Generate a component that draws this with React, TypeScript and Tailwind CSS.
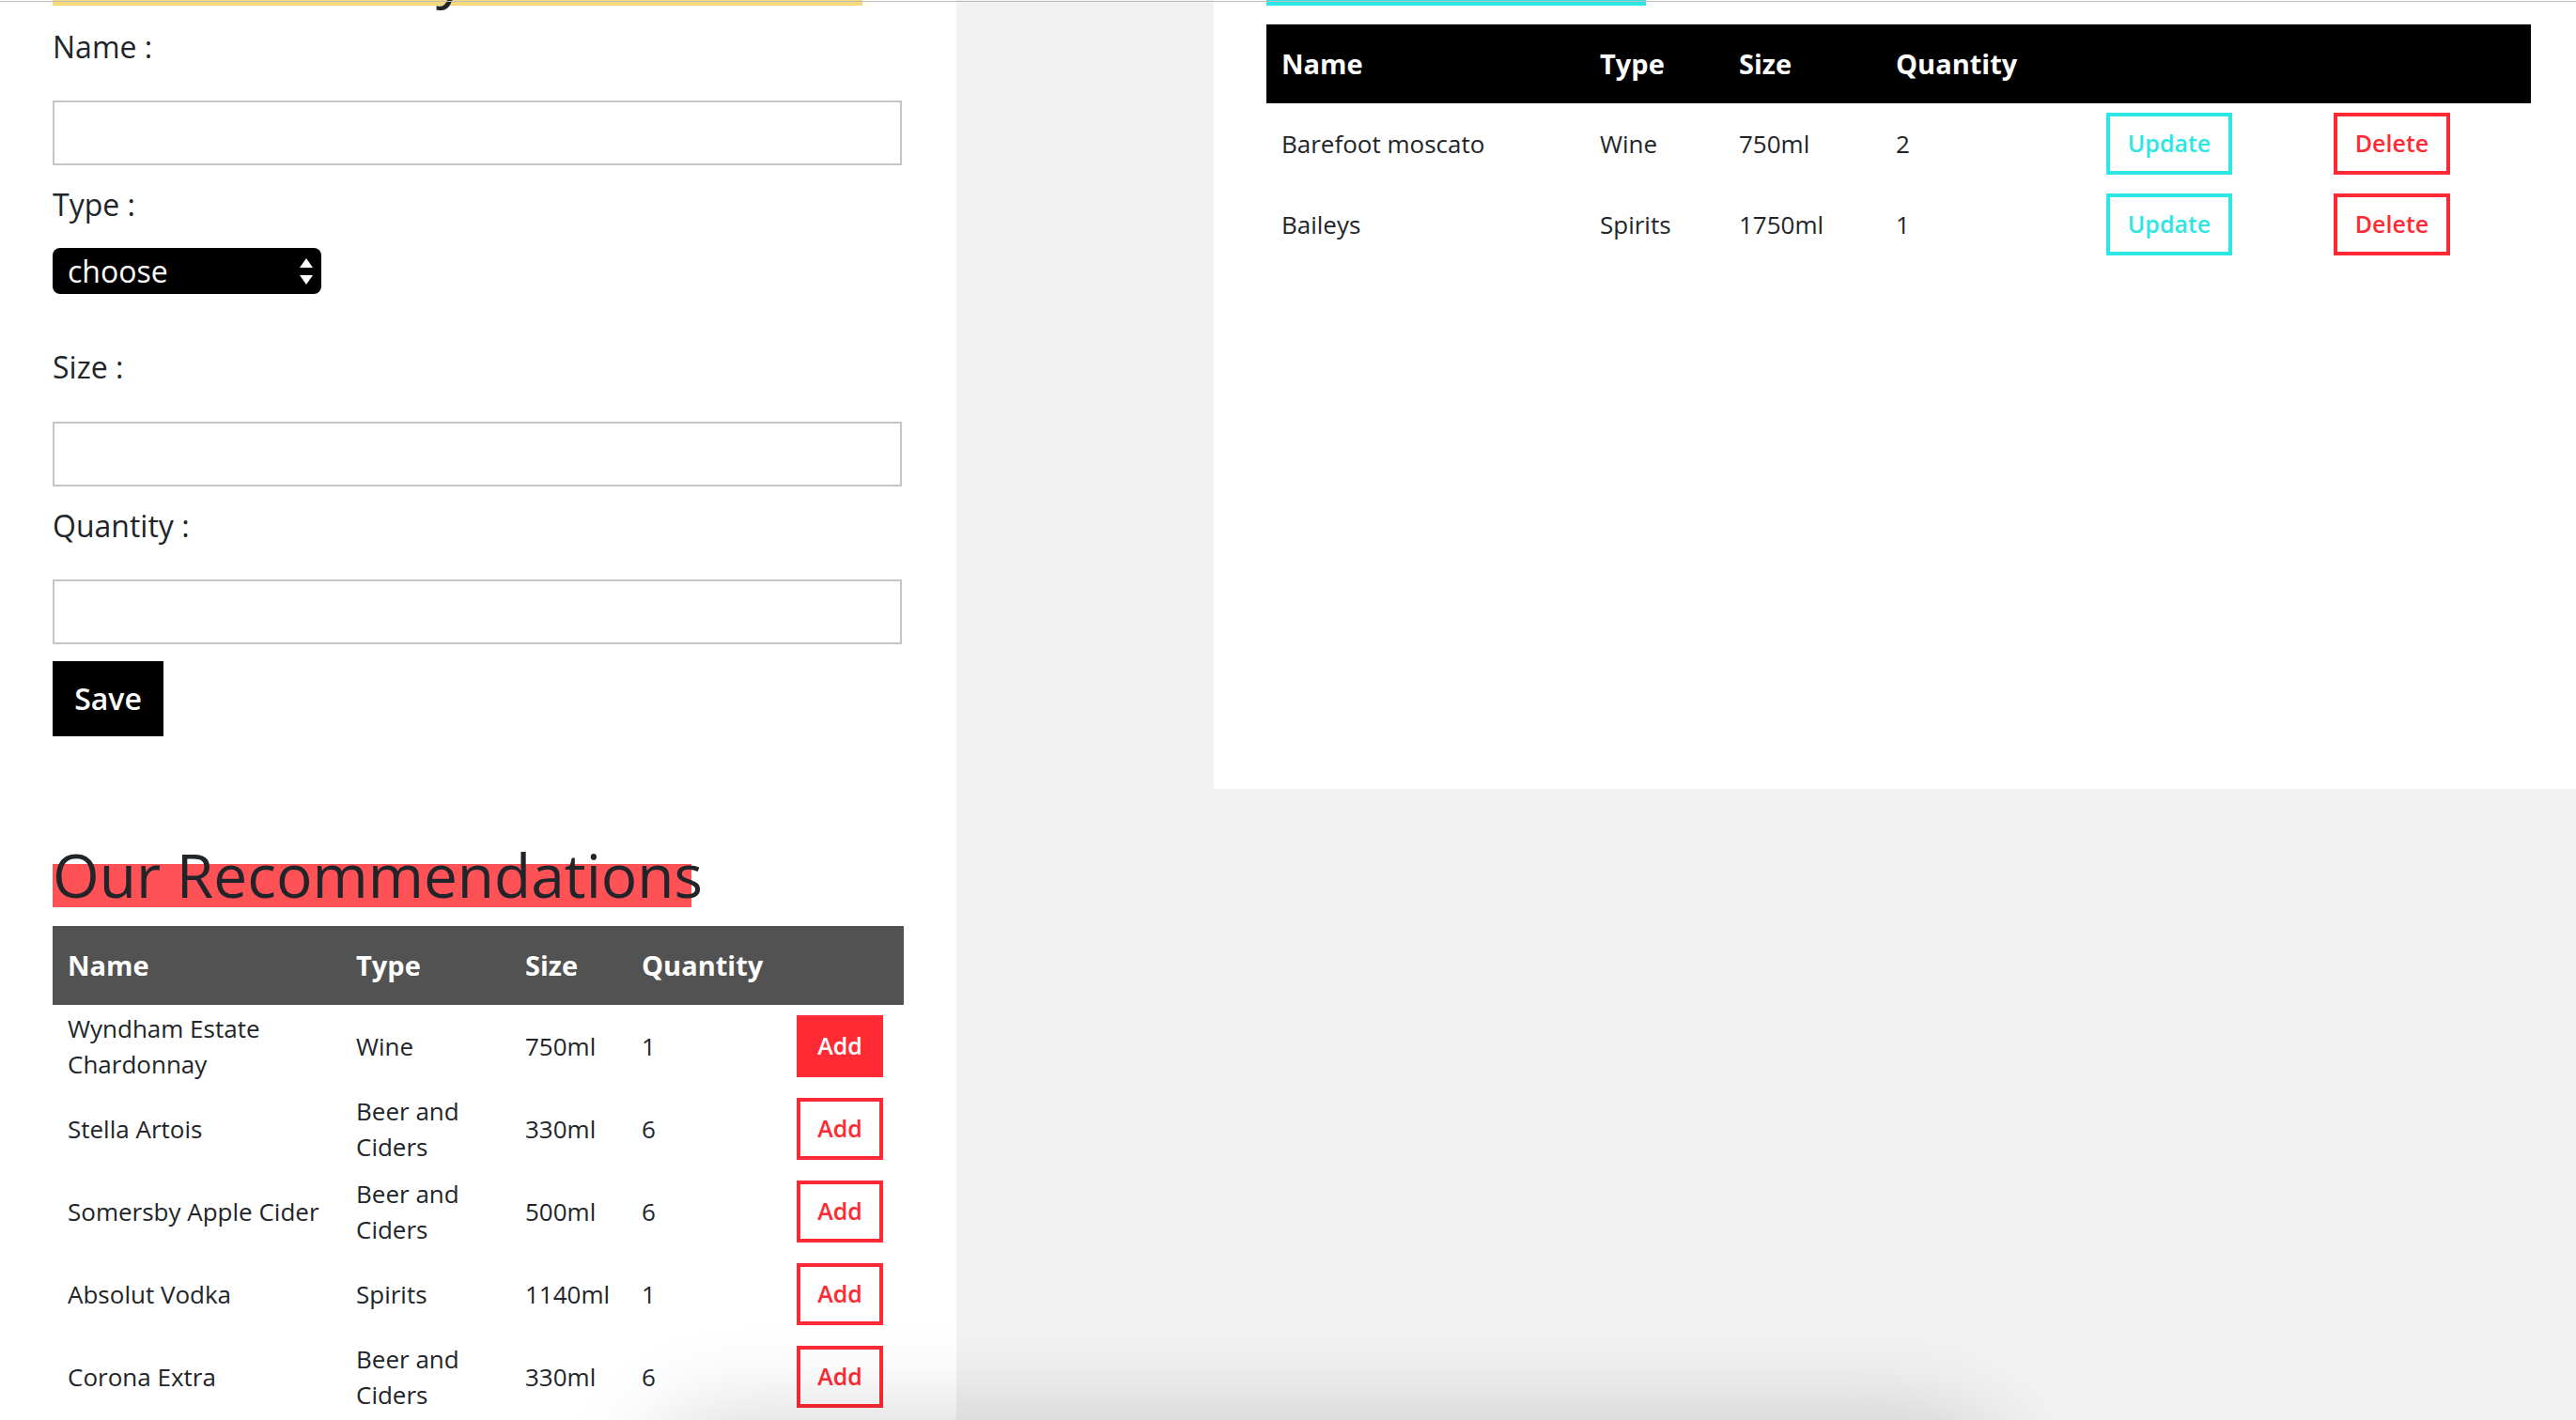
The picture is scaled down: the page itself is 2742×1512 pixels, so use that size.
import React from "react";

const recs = [
  { name: "Wyndham Estate Chardonnay", type: "Wine", size: "750ml", qty: "1" },
  { name: "Stella Artois", type: "Beer and Ciders", size: "330ml", qty: "6" },
  { name: "Somersby Apple Cider", type: "Beer and Ciders", size: "500ml", qty: "6" },
  { name: "Absolut Vodka", type: "Spirits", size: "1140ml", qty: "1" },
  { name: "Corona Extra", type: "Beer and Ciders", size: "330ml", qty: "6" },
];

const inventory = [
  { name: "Barefoot moscato", type: "Wine", size: "750ml", qty: "2" },
  { name: "Baileys", type: "Spirits", size: "1750ml", qty: "1" },
];

function Label({ children, className }: { children: React.ReactNode; className: string }) {
  return <div className={"text-[32px] leading-[48px] h-[48px] text-[#212529] " + className}>{children}</div>;
}

function TextInput({ className }: { className: string }) {
  return <input type="text" className={"block h-[69px] w-[904px] border-2 border-[#c6c6c6] bg-white outline-none " + className} />;
}

export default function App() {
  return (
    <div className="relative flex h-[1512px] w-[2742px] overflow-hidden bg-[#f2f2f2] font-['Open_Sans',sans-serif] text-[#212529]">
      {/* Left column */}
      <div className="flex w-[1018px] shrink-0 flex-col bg-white pl-[56px]">
        <div className="relative -mt-[65px] h-[74px]">
          <div className="absolute left-0 top-[25px] h-[46px] w-[862px] bg-[#f6d97b]" />
          <h1 className="relative text-[64px] leading-[74px] font-normal whitespace-nowrap">Your Inventory</h1>
        </div>

        <Label className="mt-[17px]">Name :</Label>
        <TextInput className="mt-[33px]" />

        <Label className="mt-[18px]">Type :</Label>
        <div className="relative mt-[22px] h-[49px] w-[286px]">
          <select className="h-[49px] w-[286px] appearance-none rounded-[8px] bg-black pl-[16px] text-[32px] leading-[49px] text-white outline-none">
            <option>choose</option>
          </select>
          <svg className="pointer-events-none absolute right-[9px] top-[11px]" width="14" height="29" viewBox="0 0 14 29">
            <polygon points="0,10 7,0 14,10" fill="white" />
            <polygon points="0,18 14,18 7,28" fill="white" />
          </svg>
        </div>

        <Label className="mt-[54px]">Size :</Label>
        <TextInput className="mt-[34px]" />

        <Label className="mt-[18px]">Quantity :</Label>
        <TextInput className="mt-[33px]" />

        <button className="mt-[18px] flex h-[80px] w-[118px] items-center justify-center bg-black text-[32px] font-semibold text-white">
          Save
        </button>

        <div className="relative mt-[111px] h-[74px]">
          <div className="absolute left-0 top-[25px] h-[46px] w-[680px] bg-[#ff5257]" />
          <h2 className="relative text-[64px] leading-[74px] font-normal whitespace-nowrap text-[#212529]">Our Recommendations</h2>
        </div>

        <table className="mt-[17px] w-[906px] table-fixed border-collapse">
          <colgroup>
            <col className="w-[307px]" />
            <col className="w-[180px]" />
            <col className="w-[124px]" />
            <col className="w-[165px]" />
            <col className="w-[130px]" />
          </colgroup>
          <thead>
            <tr className="h-[84px] bg-[#525252] text-white">
              <th className="px-[16px] text-left align-middle text-[29px] font-bold leading-[42px]">Name</th>
              <th className="px-[16px] text-left align-middle text-[29px] font-bold leading-[42px]">Type</th>
              <th className="px-[16px] text-left align-middle text-[29px] font-bold leading-[42px]">Size</th>
              <th className="px-[16px] text-left align-middle text-[29px] font-bold leading-[42px]">Quantity</th>
              <th className="px-[16px]" />
            </tr>
          </thead>
          <tbody>
            {recs.map((r, i) => (
              <tr key={r.name}>
                <td className="px-[16px] py-[6px] align-middle text-[26px] leading-[38px]">{r.name}</td>
                <td className="px-[16px] py-[6px] align-middle text-[26px] leading-[38px]">{r.type}</td>
                <td className="px-[16px] py-[6px] align-middle text-[26px] leading-[38px]">{r.size}</td>
                <td className="px-[16px] py-[6px] align-middle text-[26px] leading-[38px]">{r.qty}</td>
                <td className="px-[16px] py-[6px] align-middle">
                  <button
                    className={
                      i === 0
                        ? "my-[5px] flex h-[66px] w-[92px] items-center justify-center border-4 border-[#ff2a33] bg-[#ff2a33] text-[25px] font-semibold text-white"
                        : "my-[5px] flex h-[66px] w-[92px] items-center justify-center border-4 border-[#ff2a33] bg-white text-[25px] font-semibold text-[#ff2a33]"
                    }
                  >
                    Add
                  </button>
                </td>
              </tr>
            ))}
          </tbody>
        </table>
      </div>

      {/* Right column */}
      <div className="ml-[274px] flex h-[840px] flex-1 flex-col bg-white pl-[56px]">
        <div className="relative -mt-[65px] h-[74px]">
          <div className="absolute left-0 top-[25px] h-[46px] w-[404px] bg-[#2ce6e4]" />
        </div>

        <table className="mt-[17px] w-[1346px] table-fixed border-collapse">
          <colgroup>
            <col className="w-[339px]" />
            <col className="w-[148px]" />
            <col className="w-[167px]" />
            <col className="w-[224px]" />
            <col className="w-[242px]" />
            <col className="w-[226px]" />
          </colgroup>
          <thead>
            <tr className="h-[84px] bg-black text-white">
              <th className="px-[16px] text-left align-middle text-[29px] font-bold leading-[42px]">Name</th>
              <th className="px-[16px] text-left align-middle text-[29px] font-bold leading-[42px]">Type</th>
              <th className="px-[16px] text-left align-middle text-[29px] font-bold leading-[42px]">Size</th>
              <th className="px-[16px] text-left align-middle text-[29px] font-bold leading-[42px]">Quantity</th>
              <th className="px-[16px]" />
              <th className="px-[16px]" />
            </tr>
          </thead>
          <tbody>
            {inventory.map((r) => (
              <tr key={r.name}>
                <td className="px-[16px] py-[10px] align-middle text-[26px] leading-[38px]">{r.name}</td>
                <td className="px-[16px] py-[10px] align-middle text-[26px] leading-[38px]">{r.type}</td>
                <td className="px-[16px] py-[10px] align-middle text-[26px] leading-[38px]">{r.size}</td>
                <td className="px-[16px] py-[10px] align-middle text-[26px] leading-[38px]">{r.qty}</td>
                <td className="px-[16px] py-[10px] align-middle">
                  <button className="flex h-[66px] w-[134px] items-center justify-center border-4 border-[#2ce6e4] bg-white text-[25px] font-semibold text-[#2ce6e4]">
                    Update
                  </button>
                </td>
                <td className="px-[16px] py-[10px] align-middle">
                  <button className="flex h-[66px] w-[124px] items-center justify-center border-4 border-[#ff2a33] bg-white text-[25px] font-semibold text-[#ff2a33]">
                    Delete
                  </button>
                </td>
              </tr>
            ))}
          </tbody>
        </table>
      </div>

      {/* top edge line */}
      <div className="pointer-events-none absolute left-0 right-0 top-[1px] h-px bg-[#bdbdbd]" />
      {/* shadow of element just below the viewport */}
      <div className="pointer-events-none absolute left-[720px] top-[1545px] h-[120px] w-[1380px] rounded-[60px] bg-[#e2e2e2] shadow-[0_0_100px_40px_rgba(0,0,0,0.16)]" />
    </div>
  );
}
